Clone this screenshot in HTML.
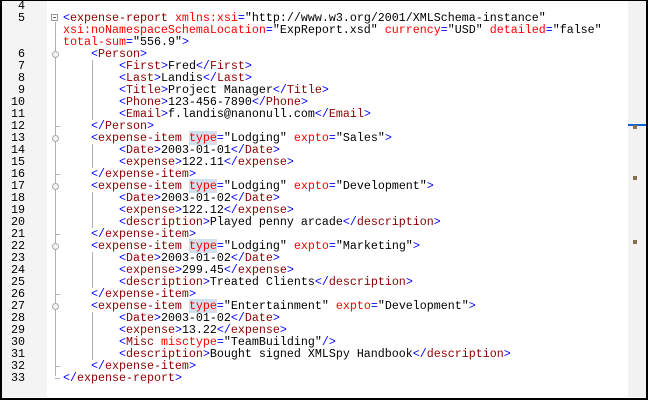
<!DOCTYPE html>
<html><head><meta charset="utf-8"><style>
html,body{margin:0;padding:0;background:#fff;}
#w{position:relative;width:648px;height:401px;overflow:hidden;background:#fff;}
#b{position:absolute;left:0;top:0;width:644px;height:397px;border:2px solid #000;border-top-width:1px;border-bottom:2px solid #000;}
#g{position:absolute;left:2px;top:1px;width:45px;height:396px;background:#f4f4f4;}
#sb{position:absolute;left:628px;top:1px;width:18px;height:396px;background:#f2f2f2;}
pre{margin:0;font-family:"Liberation Mono",monospace;font-size:11.67px;line-height:12px;position:absolute;top:0;}
#n{left:2px;width:23px;text-align:right;color:#000;}
#c{left:63px;color:#000;}
.t{color:#0000ff}.e{color:#8b0000}.a{color:#ff0000}.h{background:#d2e0ee}
.v{position:absolute;width:1px;background:#b0b0b0;}
.hz{position:absolute;height:1px;background:#b0b0b0;}
.m{position:absolute;left:633px;width:4px;height:4px;background:#8a7050;}
.o{position:absolute;left:52px;width:7px;height:7px;border:1px solid #aaa;border-radius:50%;background:#f4f4f0;box-sizing:border-box;}
</style></head><body><div id="w">
<div id="g"></div><div id="sb"></div>
<div style="position:absolute;left:628px;top:124px;width:18px;height:2px;background:#0a64d8"></div>
<div class="m" style="top:125px"></div><div class="m" style="top:176px"></div><div class="m" style="top:240px"></div>
<pre id="n">4
5


6
7
8
9
10
11
12
13
14
15
16
17
18
19
20
21
22
23
24
25
26
27
28
29
30
31
32
33</pre>
<div class="v" style="left:55px;top:22px;height:354px"></div>
<div class="hz" style="left:55px;top:378px;width:5px"></div>
<div class="hz" style="left:55px;top:126px;width:5px"></div>
<div class="hz" style="left:55px;top:174px;width:5px"></div>
<div class="hz" style="left:55px;top:234px;width:5px"></div>
<div class="hz" style="left:55px;top:294px;width:5px"></div>
<div class="hz" style="left:55px;top:366px;width:5px"></div>
<div style="position:absolute;left:51px;top:14px;width:7px;height:7px;border:1px solid #999;background:#fff;box-sizing:border-box"></div>
<div style="position:absolute;left:53px;top:17px;width:3px;height:1px;background:#666"></div>
<div class="o" style="top:51px"></div>
<div class="o" style="top:135px"></div>
<div class="o" style="top:183px"></div>
<div class="o" style="top:243px"></div>
<div class="o" style="top:303px"></div>
<div class="v" style="left:92px;top:60px;height:60px"></div>
<div class="v" style="left:92px;top:144px;height:24px"></div>
<div class="v" style="left:92px;top:192px;height:36px"></div>
<div class="v" style="left:92px;top:252px;height:36px"></div>
<div class="v" style="left:92px;top:312px;height:48px"></div>
<pre id="c">

<span class="t">&lt;</span><span class="e">expense-report</span> <span class="a">xmlns:xsi</span><span class="t">=</span>"http://www.w3.org/2001/XMLSchema-instance"
<span class="a">xsi:noNamespaceSchemaLocation</span><span class="t">=</span>"ExpReport.xsd" <span class="a">currency</span><span class="t">=</span>"USD" <span class="a">detailed</span><span class="t">=</span>"false"
<span class="a">total-sum</span><span class="t">=</span>"556.9"<span class="t">&gt;</span>
    <span class="t">&lt;</span><span class="e">Person</span><span class="t">&gt;</span>
        <span class="t">&lt;</span><span class="e">First</span><span class="t">&gt;</span>Fred<span class="t">&lt;/</span><span class="e">First</span><span class="t">&gt;</span>
        <span class="t">&lt;</span><span class="e">Last</span><span class="t">&gt;</span>Landis<span class="t">&lt;/</span><span class="e">Last</span><span class="t">&gt;</span>
        <span class="t">&lt;</span><span class="e">Title</span><span class="t">&gt;</span>Project Manager<span class="t">&lt;/</span><span class="e">Title</span><span class="t">&gt;</span>
        <span class="t">&lt;</span><span class="e">Phone</span><span class="t">&gt;</span>123-456-7890<span class="t">&lt;/</span><span class="e">Phone</span><span class="t">&gt;</span>
        <span class="t">&lt;</span><span class="e">Email</span><span class="t">&gt;</span>f.landis@nanonull.com<span class="t">&lt;/</span><span class="e">Email</span><span class="t">&gt;</span>
    <span class="t">&lt;/</span><span class="e">Person</span><span class="t">&gt;</span>
    <span class="t">&lt;</span><span class="e">expense-item</span> <span class="a h">type</span><span class="t">=</span>"Lodging" <span class="a">expto</span><span class="t">=</span>"Sales"<span class="t">&gt;</span>
        <span class="t">&lt;</span><span class="e">Date</span><span class="t">&gt;</span>2003-01-01<span class="t">&lt;/</span><span class="e">Date</span><span class="t">&gt;</span>
        <span class="t">&lt;</span><span class="e">expense</span><span class="t">&gt;</span>122.11<span class="t">&lt;/</span><span class="e">expense</span><span class="t">&gt;</span>
    <span class="t">&lt;/</span><span class="e">expense-item</span><span class="t">&gt;</span>
    <span class="t">&lt;</span><span class="e">expense-item</span> <span class="a h">type</span><span class="t">=</span>"Lodging" <span class="a">expto</span><span class="t">=</span>"Development"<span class="t">&gt;</span>
        <span class="t">&lt;</span><span class="e">Date</span><span class="t">&gt;</span>2003-01-02<span class="t">&lt;/</span><span class="e">Date</span><span class="t">&gt;</span>
        <span class="t">&lt;</span><span class="e">expense</span><span class="t">&gt;</span>122.12<span class="t">&lt;/</span><span class="e">expense</span><span class="t">&gt;</span>
        <span class="t">&lt;</span><span class="e">description</span><span class="t">&gt;</span>Played penny arcade<span class="t">&lt;/</span><span class="e">description</span><span class="t">&gt;</span>
    <span class="t">&lt;/</span><span class="e">expense-item</span><span class="t">&gt;</span>
    <span class="t">&lt;</span><span class="e">expense-item</span> <span class="a h">type</span><span class="t">=</span>"Lodging" <span class="a">expto</span><span class="t">=</span>"Marketing"<span class="t">&gt;</span>
        <span class="t">&lt;</span><span class="e">Date</span><span class="t">&gt;</span>2003-01-02<span class="t">&lt;/</span><span class="e">Date</span><span class="t">&gt;</span>
        <span class="t">&lt;</span><span class="e">expense</span><span class="t">&gt;</span>299.45<span class="t">&lt;/</span><span class="e">expense</span><span class="t">&gt;</span>
        <span class="t">&lt;</span><span class="e">description</span><span class="t">&gt;</span>Treated Clients<span class="t">&lt;/</span><span class="e">description</span><span class="t">&gt;</span>
    <span class="t">&lt;/</span><span class="e">expense-item</span><span class="t">&gt;</span>
    <span class="t">&lt;</span><span class="e">expense-item</span> <span class="a h">type</span><span class="t">=</span>"Entertainment" <span class="a">expto</span><span class="t">=</span>"Development"<span class="t">&gt;</span>
        <span class="t">&lt;</span><span class="e">Date</span><span class="t">&gt;</span>2003-01-02<span class="t">&lt;/</span><span class="e">Date</span><span class="t">&gt;</span>
        <span class="t">&lt;</span><span class="e">expense</span><span class="t">&gt;</span>13.22<span class="t">&lt;/</span><span class="e">expense</span><span class="t">&gt;</span>
        <span class="t">&lt;</span><span class="e">Misc</span> <span class="a">misctype</span><span class="t">=</span>"TeamBuilding"<span class="t">/&gt;</span>
        <span class="t">&lt;</span><span class="e">description</span><span class="t">&gt;</span>Bought signed XMLSpy Handbook<span class="t">&lt;/</span><span class="e">description</span><span class="t">&gt;</span>
    <span class="t">&lt;/</span><span class="e">expense-item</span><span class="t">&gt;</span>
<span class="t">&lt;/</span><span class="e">expense-report</span><span class="t">&gt;</span></pre>
<div id="b"></div>
</div></body></html>
